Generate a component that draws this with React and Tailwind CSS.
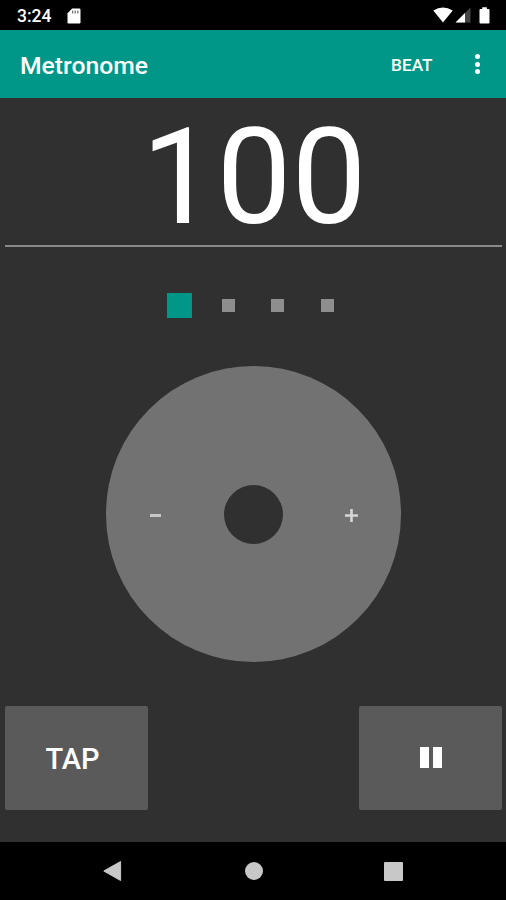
import React, { useState } from "react";

function StatusBar() {
  return (
    <div className="flex h-[30px] items-center bg-black pl-[17px] pr-[16px] text-white">
      <span className="text-[17.5px] font-medium leading-[30px] pt-[2px]">3:24</span>
      {/* SD card */}
      <svg className="ml-[16px] mt-[1px]" width="14" height="16" viewBox="0 0 14 16">
        <path
          d="M5.2 0.5H12.3Q13.5 0.5 13.5 1.8V14.2Q13.5 15.5 12.3 15.5H1.7Q0.5 15.5 0.5 14.2V5.2Z"
          fill="#fff"
        />
        <path d="M5.6 2.6V5.4M8.2 2.6V5.4M10.8 2.6V5.4" stroke="#777" strokeWidth="1.3" />
      </svg>
      <div className="ml-auto flex items-center">
        {/* Wifi */}
        <svg width="20" height="16" viewBox="0 0 20 16">
          <path d="M0.3 3.6Q10 -2.4 19.7 3.6L10 15.5Z" fill="#fff" />
        </svg>
        {/* Signal */}
        <svg className="ml-[2px]" width="16" height="16" viewBox="0 0 16 16">
          <path d="M15.5 0.5V15.5H0.5Z" fill="#444" />
          <path d="M10 6V15.5H0.5Z" fill="#fff" />
        </svg>
        {/* Battery */}
        <svg className="ml-[8px]" width="11" height="17" viewBox="0 0 11 17">
          <path
            d="M3.2 0.3H7.8V2H9.6Q10.5 2 10.5 3V15.6Q10.5 16.6 9.6 16.6H1.4Q0.5 16.6 0.5 15.6V3Q0.5 2 1.4 2H3.2Z"
            fill="#fff"
          />
        </svg>
      </div>
    </div>
  );
}

function AppBar() {
  return (
    <header className="flex h-[68px] items-center bg-[#009788] pl-[20px] pr-[26.5px] text-white">
      <h1 className="pt-[4px] text-[24.7px] font-medium">Metronome</h1>
      <button className="ml-auto pt-[3px] text-[17.2px] font-medium">BEAT</button>
      <button className="ml-[42px] flex flex-col gap-[2.5px]">
        <span className="h-[5px] w-[5px] rounded-full bg-white"></span>
        <span className="h-[5px] w-[5px] rounded-full bg-white"></span>
        <span className="h-[5px] w-[5px] rounded-full bg-white"></span>
      </button>
    </header>
  );
}

function NavBar() {
  return (
    <nav className="flex h-[58px] items-center justify-between bg-black pl-[103px] pr-[103px]">
      <svg width="20" height="22" viewBox="0 0 20 22">
        <path d="M17.6 1.5V20.5L0.8 11Z" fill="#c8c8c8" stroke="#c8c8c8" strokeLinejoin="round" />
      </svg>
      <span className="h-[18px] w-[18px] rounded-full bg-[#c8c8c8]"></span>
      <span className="h-[19px] w-[19px] rounded-[1px] bg-[#c8c8c8]"></span>
    </nav>
  );
}

export default function App() {
  const [bpm, setBpm] = useState(100);
  const beats = [true, false, false, false];

  return (
    <div
      className="flex h-[900px] w-[506px] flex-col overflow-hidden bg-[#303030]"
      style={{ fontFamily: "Roboto, sans-serif" }}
    >
      <StatusBar />
      <AppBar />
      <main className="flex flex-1 flex-col pl-[5px] pr-[4px]">
        {/* Tempo */}
        <div className="h-[149px] border-b-2 border-[#8a8a8a] pl-[1px] text-center text-[133.5px] leading-[160px] text-white">
          {bpm}
        </div>

        {/* Beats */}
        <div className="mt-[46px] flex h-[25px] items-center pl-[150px]">
          {beats.map((active, index) => (
            <div key={index} className="flex w-[49.2px] justify-center">
              <span
                className={active ? "h-[25px] w-[25px] bg-[#009788]" : "h-[13px] w-[13px] bg-[#8e8e8e]"}
              ></span>
            </div>
          ))}
        </div>

        {/* Tempo wheel */}
        <div className="mx-auto mt-[48.4px] flex h-[295.6px] w-[295.6px] items-center justify-between rounded-full bg-[#727272] px-[43px]">
          <button className="flex h-[13px] w-[13px] items-center" onClick={() => setBpm(bpm - 1)}>
            <svg width="13" height="13" viewBox="0 0 13 13">
              <path d="M1 7.5H12" stroke="#c6c6c6" strokeWidth="3" />
            </svg>
          </button>
          <span className="h-[59px] w-[59px] rounded-full bg-[#303030]"></span>
          <button className="flex h-[13px] w-[13px] items-center" onClick={() => setBpm(bpm + 1)}>
            <svg className="mt-[3px]" width="13" height="13" viewBox="0 0 13 13">
              <path d="M0 6.5H13M6.5 0V13" stroke="#d6d6d6" strokeWidth="2.6" />
            </svg>
          </button>
        </div>

        {/* Buttons */}
        <div className="mt-[44px] flex justify-between">
          <button className="h-[104px] w-[143px] rounded-[2px] bg-[#5a5a5b] pr-[8px] pt-[3px] text-[29px] font-medium text-white">
            TAP
          </button>
          <button className="flex h-[104px] w-[143px] items-center justify-center gap-[4px] rounded-[2px] bg-[#5a5a5b]">
            <span className="h-[21px] w-[9px] bg-white"></span>
            <span className="h-[21px] w-[9px] bg-white"></span>
          </button>
        </div>
      </main>
      <NavBar />
    </div>
  );
}
